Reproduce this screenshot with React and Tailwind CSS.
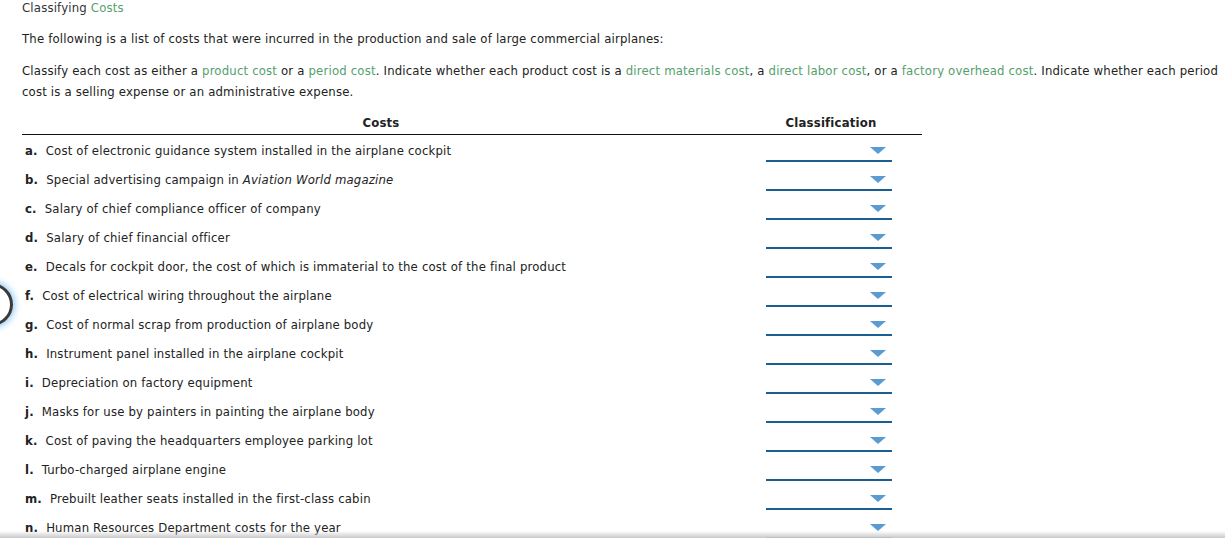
const ROWS = [
  ['a.', 'Cost of electronic guidance system installed in the airplane cockpit'],
  ['b.', <>Special advertising campaign in <i>Aviation World magazine</i></>],
  ['c.', 'Salary of chief compliance officer of company'],
  ['d.', 'Salary of chief financial officer'],
  ['e.', 'Decals for cockpit door, the cost of which is immaterial to the cost of the final product'],
  ['f.', 'Cost of electrical wiring throughout the airplane'],
  ['g.', 'Cost of normal scrap from production of airplane body'],
  ['h.', 'Instrument panel installed in the airplane cockpit'],
  ['i.', 'Depreciation on factory equipment'],
  ['j.', 'Masks for use by painters in painting the airplane body'],
  ['k.', 'Cost of paving the headquarters employee parking lot'],
  ['l.', 'Turbo-charged airplane engine'],
  ['m.', 'Prebuilt leather seats installed in the first-class cabin'],
  ['n.', 'Human Resources Department costs for the year'],
];

function Term({ children }) {
  return <span className="text-[#55a06c]">{children}</span>;
}

function Dropdown() {
  return (
    <div className="relative ml-[26px] h-[27px] w-[126px] border-b-2 border-[#1b5f92]">
      <div className="absolute right-[6px] top-[12px] h-0 w-0 border-x-[8px] border-t-[7px] border-x-transparent border-t-[#5b9bd0]" />
    </div>
  );
}

export default function App() {
  return (
    <div className="relative h-[538px] w-[1225px] overflow-hidden bg-white text-[13px] tracking-[0.18px] text-[#222] font-['DejaVu_Sans_Condensed','DejaVu_Sans',sans-serif]">
      <div className="pl-[22px]">
        <div className="leading-[15px] text-[#333]">
          Classifying <Term>Costs</Term>
        </div>
        <p className="mt-[13px] leading-[21px]">
          The following is a list of costs that were incurred in the production and sale of large commercial airplanes:
        </p>
        <p className="mt-[11px] leading-[21px] pr-[2px]">
          Classify each cost as either a <Term>product cost</Term> or a <Term>period cost</Term>. Indicate whether each product cost is a{' '}
          <Term>direct materials cost</Term>, a <Term>direct labor cost</Term>, or a <Term>factory overhead cost</Term>. Indicate whether each period cost is a selling expense or an administrative expense.
        </p>

        <div className="mt-[10px] w-[900px]">
          <div className="grid grid-cols-[718px_182px] border-b border-[#111] font-bold leading-[22px]">
            <div className="text-center">Costs</div>
            <div className="text-center">Classification</div>
          </div>
          {ROWS.map(([label, text]) => (
            <div key={label} className="grid grid-cols-[718px_182px] h-[29px]">
              <div className="flex items-center pl-[3px] pt-[3px]">
                <b className="mr-[8px]">{label}</b>
                <span>{text}</span>
              </div>
              <Dropdown />
            </div>
          ))}
        </div>
      </div>

      <div className="absolute left-[-30px] top-[283px] h-[43px] w-[43px] rounded-full border-[3px] border-[#3a3a3a] shadow-[0_0_6px_2px_rgba(80,170,240,0.6)]" />
      <div className="absolute bottom-0 left-0 h-[7px] w-full bg-gradient-to-b from-transparent to-[#c8c8c8]" />
    </div>
  );
}
